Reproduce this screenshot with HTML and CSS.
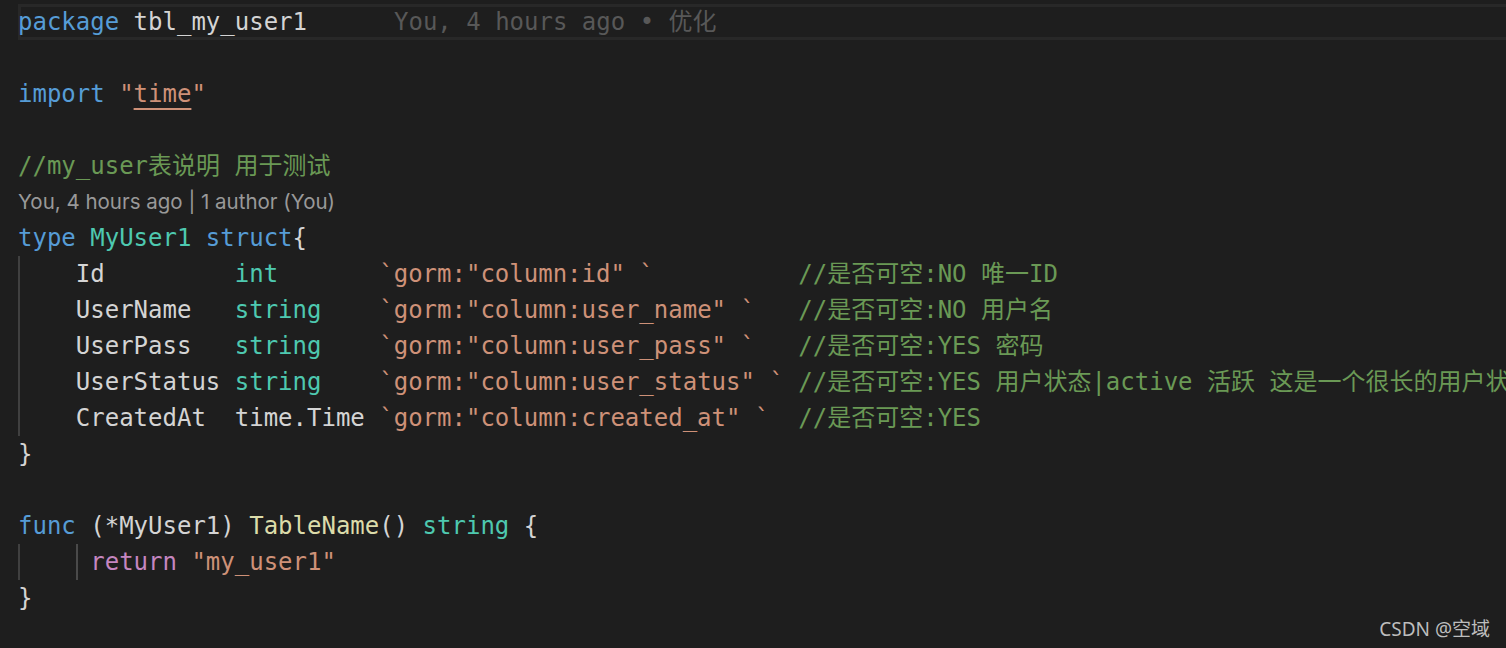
FILE: index.html
```html
<!DOCTYPE html>
<html lang="zh-CN">
<head>
    <meta charset="UTF-8">
    <meta name="viewport" content="width=device-width, initial-scale=1.0">
    <title>tbl_my_user1.go</title>
    <link rel="stylesheet" href="styles.css">
</head>
<body>
    <div class="editor">
        <div class="line current"><span class="kw">package</span> tbl_my_user1<span class="blame">You, 4 hours ago • 优化</span></div>
        <div class="line"></div>
        <div class="line"><span class="kw">import</span> <span class="str">"<span class="link">time</span>"</span></div>
        <div class="line"></div>
        <div class="line"><span class="cmt">//my_user表说明 用于测试</span></div>
        <div class="codelens">You, 4 hours ago | 1 author (You)</div>
        <div class="line"><span class="kw">type</span> <span class="type">MyUser1</span> <span class="kw">struct</span>{</div>
        <div class="line guide">    Id         <span class="type">int</span>       <span class="str">`gorm:"column:id" `</span>          <span class="cmt">//是否可空:NO 唯一ID</span></div>
        <div class="line guide">    UserName   <span class="type">string</span>    <span class="str">`gorm:"column:user_name" `</span>   <span class="cmt">//是否可空:NO 用户名</span></div>
        <div class="line guide">    UserPass   <span class="type">string</span>    <span class="str">`gorm:"column:user_pass" `</span>   <span class="cmt">//是否可空:YES 密码</span></div>
        <div class="line guide">    UserStatus <span class="type">string</span>    <span class="str">`gorm:"column:user_status" `</span> <span class="cmt">//是否可空:YES 用户状态|active 活跃 这是一个很长的用户状</span></div>
        <div class="line guide">    CreatedAt  time.Time <span class="str">`gorm:"column:created_at" `</span>  <span class="cmt">//是否可空:YES</span></div>
        <div class="line">}</div>
        <div class="line"></div>
        <div class="line"><span class="kw">func</span> (*MyUser1) <span class="fn">TableName</span>() <span class="type">string</span> {</div>
        <div class="line guide-2">     <span class="ctl">return</span> <span class="str">"my_user1"</span></div>
        <div class="line">}</div>
    </div>

    <div class="watermark">CSDN @空域</div>
</body>
</html>
```

FILE: styles.css
```css
* {
    margin: 0;
    padding: 0;
    box-sizing: border-box;
}

body {
    background-color: #1e1e1e;
    height: 648px;
    overflow: hidden;
    position: relative;
}

.editor {
    padding: 4px 0 0 18px;
    font-family: 'DejaVu Sans Mono', 'Noto Sans CJK SC', monospace;
    font-size: 24px;
    line-height: 36px;
    color: #d4d4d4;
}

.line {
    height: 36px;
    white-space: pre;
    overflow: hidden;
}

.line.current {
    margin-right: -6px;
    box-shadow: inset 0 0 0 3px #282828;
}

/* indent guides */
.guide {
    background: linear-gradient(#404040, #404040) no-repeat 0 0 / 2px 100%;
}

.guide-2 {
    background:
        linear-gradient(#404040, #404040) no-repeat 0 0 / 2px 100%,
        linear-gradient(#4a4a4a, #4a4a4a) no-repeat 58px 0 / 2px 100%;
}

.kw { color: #569cd6; }
.type { color: #4ec9b0; }
.str { color: #ce9178; }
.cmt { color: #6a9955; }
.fn { color: #dcdcaa; }
.ctl { color: #c586c0; }

.link {
    text-decoration: underline;
    text-decoration-color: #ce9178;
    text-decoration-thickness: 2px;
    text-underline-offset: 6px;
}

.blame {
    color: #585858;
    margin-left: 87px;
}

.codelens {
    height: 36px;
    line-height: 36px;
    font-family: 'Inter', 'Noto Sans', sans-serif;
    font-size: 20.5px;
    color: #999999;
    white-space: pre;
}

.watermark {
    position: absolute;
    right: 16px;
    bottom: 6px;
    font-family: 'Noto Sans', 'Noto Sans CJK SC', sans-serif;
    font-size: 19px;
    color: #bdbdbd;
}
```
